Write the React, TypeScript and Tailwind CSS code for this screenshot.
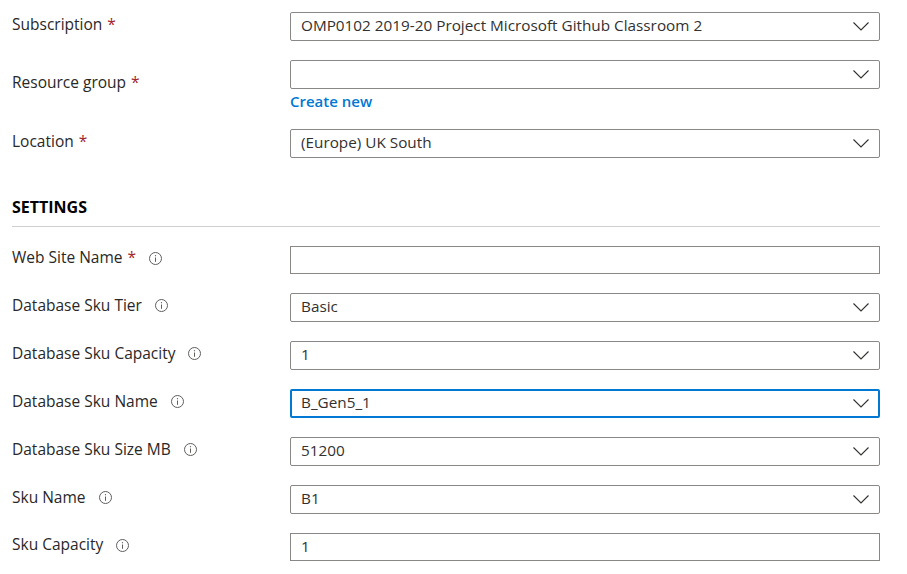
import React from 'react';

const font = { fontFamily: '"Open Sans", "Noto Sans", Arial, sans-serif' };

const Chevron: React.FC = () => (
  <svg width="16" height="9" viewBox="0 0 16 9" className="shrink-0">
    <polyline points="0.5,0.5 8,8 15.5,0.5" fill="none" stroke="#323130" strokeWidth="1.1" />
  </svg>
);

const InfoIcon: React.FC = () => (
  <svg width="13" height="13" viewBox="0 0 13 13" className="ml-[13px] shrink-0">
    <circle cx="6.5" cy="6.5" r="6" fill="none" stroke="#605e5c" strokeWidth="1" />
    <line x1="6.5" y1="5.5" x2="6.5" y2="9.8" stroke="#605e5c" strokeWidth="1" />
    <circle cx="6.5" cy="3.7" r="0.65" fill="#605e5c" />
  </svg>
);

interface LabelProps {
  text: string;
  required?: boolean;
  info?: boolean;
}

const Label: React.FC<LabelProps> = ({ text, required, info }) => (
  <div className="w-[290px] shrink-0 flex items-center pl-3 pb-1 text-[15.5px] text-[#292827]">
    <span>{text}</span>
    {required && <span className="ml-[5px] text-[#a4262c]">*</span>}
    {info && <InfoIcon />}
  </div>
);

const Dropdown: React.FC<{ value?: string; focused?: boolean }> = ({ value, focused }) => (
  <div
    className={
      focused
        ? 'h-[29px] w-[590px] flex items-center justify-between rounded-[2px] border-2 border-[#0078d4] pl-[9px] pr-[9px] pb-px bg-white'
        : 'h-[29px] w-[590px] flex items-center justify-between rounded-[2px] border border-[#8a8886] pl-[10px] pr-[10px] pb-px bg-white'
    }
  >
    <span className="text-[15.3px] text-[#323130] leading-none">{value}</span>
    <Chevron />
  </div>
);

const TextBox: React.FC<{ value?: string }> = ({ value }) => (
  <div className="h-[28px] w-[590px] flex items-center border border-[#8a8886] px-[10px] pb-px bg-white">
    <span className="text-[15.3px] text-[#323130] leading-none">{value}</span>
  </div>
);

const settings = [
  { label: 'Database Sku Tier', value: 'Basic' },
  { label: 'Database Sku Capacity', value: '1' },
  { label: 'Database Sku Name', value: 'B_Gen5_1', focused: true },
  { label: 'Database Sku Size MB', value: '51200' },
  { label: 'Sku Name', value: 'B1' },
];

export default function App() {
  return (
    <div className="w-[907px] h-[574px] overflow-hidden bg-white pt-3" style={font}>
      <div className="flex flex-col gap-[19px]">
        <div className="flex">
          <Label text="Subscription" required />
          <Dropdown value="OMP0102 2019-20 Project Microsoft Github Classroom 2" />
        </div>

        <div className="flex">
          <Label text="Resource group" required />
          <div className="flex flex-col">
            <Dropdown />
            <a className="h-[17px] mt-[4px] text-[15px] font-semibold text-[#0078d4] leading-[17px]">Create new</a>
          </div>
        </div>

        <div className="flex">
          <Label text="Location" required />
          <Dropdown value="(Europe) UK South" />
        </div>
      </div>

      <div className="mt-[39px] ml-3 w-[868px] border-b border-[#d0cfce] pb-[9px]">
        <h3 className="text-[16px] font-bold text-[#000] leading-5">SETTINGS</h3>
      </div>

      <div className="mt-[19px] flex flex-col gap-[19px]">
        <div className="flex">
          <Label text="Web Site Name" required info />
          <TextBox />
        </div>
        {settings.map((s) => (
          <div className="flex" key={s.label}>
            <Label text={s.label} info />
            <Dropdown value={s.value} focused={s.focused} />
          </div>
        ))}
        <div className="flex">
          <Label text="Sku Capacity" info />
          <TextBox value="1" />
        </div>
      </div>
    </div>
  );
}
